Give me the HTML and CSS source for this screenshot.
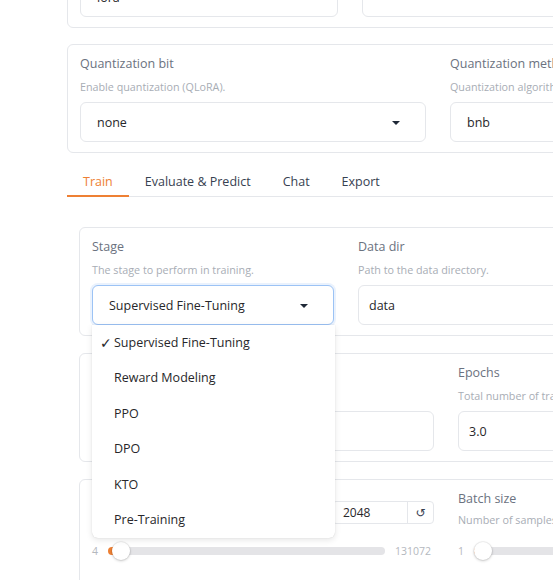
FILE: index.html
```html
<!DOCTYPE html>
<html lang="en">
<head>
<meta charset="utf-8">
<title>Train</title>
<link rel="stylesheet" href="styles.css">
</head>
<body>
<div class="app">
  <div class="panel p0">
    <div class="row cols-p0">
      <div class="field"><div class="dd"><span class="dd-val">lora</span><svg class="caret" viewBox="0 0 18 18"><path d="M5 8l4 4 4-4z"/></svg></div></div>
      <div class="field"><div class="dd"><span class="dd-val"></span><svg class="caret" viewBox="0 0 18 18"><path d="M5 8l4 4 4-4z"/></svg></div></div>
    </div>
  </div>

  <div class="panel">
    <div class="row cols-q">
      <div class="field">
        <span class="lbl">Quantization bit</span>
        <div class="info">Enable quantization (QLoRA).</div>
        <div class="dd"><span class="dd-val">none</span><svg class="caret" viewBox="0 0 18 18"><path d="M5 8l4 4 4-4z"/></svg></div>
      </div>
      <div class="field">
        <span class="lbl">Quantization method</span>
        <div class="info">Quantization algorithm to use for QLoRA.</div>
        <div class="dd"><span class="dd-val">bnb</span><svg class="caret" viewBox="0 0 18 18"><path d="M5 8l4 4 4-4z"/></svg></div>
      </div>
    </div>
  </div>

  <div class="tabs">
    <div class="tab-nav">
      <button class="tab sel">Train</button>
      <button class="tab">Evaluate &amp; Predict</button>
      <button class="tab">Chat</button>
      <button class="tab">Export</button>
    </div>

    <div class="tab-body">
      <div class="panel">
        <div class="row cols-stage">
          <div class="field has-menu">
            <span class="lbl">Stage</span>
            <div class="info">The stage to perform in training.</div>
            <div class="dd focus"><span class="dd-val">Supervised Fine-Tuning</span><svg class="caret" viewBox="0 0 18 18"><path d="M5 8l4 4 4-4z"/></svg></div>
            <ul class="menu">
              <li class="opt sel"><span class="chk">✓</span><span>Supervised Fine-Tuning</span></li>
              <li class="opt"><span class="chk">✓</span><span>Reward Modeling</span></li>
              <li class="opt"><span class="chk">✓</span><span>PPO</span></li>
              <li class="opt"><span class="chk">✓</span><span>DPO</span></li>
              <li class="opt"><span class="chk">✓</span><span>KTO</span></li>
              <li class="opt"><span class="chk">✓</span><span>Pre-Training</span></li>
            </ul>
          </div>
          <div class="field">
            <span class="lbl">Data dir</span>
            <div class="info">Path to the data directory.</div>
            <div class="tb">data</div>
          </div>
        </div>
      </div>

      <div class="panel">
        <div class="row cols-wide">
          <div class="field">
            <span class="lbl">Learning rate</span>
            <div class="info">Initial learning rate for AdamW.</div>
            <div class="tb">5e-5</div>
          </div>
          <div class="field">
            <span class="lbl">Epochs</span>
            <div class="info">Total number of training epochs to perform.</div>
            <div class="tb">3.0</div>
          </div>
        </div>
      </div>

      <div class="panel tall">
        <div class="row cols-wide">
          <div class="field">
            <div class="s-head">
              <div>
                <span class="lbl">Cutoff length</span>
                <div class="info tight">Max tokens in input sequence.</div>
              </div>
              <div class="num"><span class="num-val">2048</span><button class="reset">↺</button></div>
            </div>
            <div class="s-row">
              <span class="s-lim">4</span>
              <input class="range" type="range" min="4" max="131072" value="2048" style="--p:0.0156">
              <span class="s-lim">131072</span>
            </div>
          </div>
          <div class="field">
            <div class="s-head">
              <div>
                <span class="lbl">Batch size</span>
                <div class="info tight">Number of samples processed on each GPU.</div>
              </div>
              <div class="num"><span class="num-val">2</span><button class="reset">↺</button></div>
            </div>
            <div class="s-row">
              <span class="s-lim">1</span>
              <input class="range" type="range" min="1" max="1024" value="2" style="--p:0.001">
              <span class="s-lim">1024</span>
            </div>
          </div>
        </div>
      </div>
    </div>
  </div>
</div>
</body>
</html>
```

FILE: styles.css
```css
html, body {
  margin: 0;
  padding: 0;
  overflow: hidden;
  background: #ffffff;
}

body {
  font-family: "Open Sans", "Noto Sans", sans-serif;
  font-size: 12.5px;
  color: #27272a;
}

.app {
  width: 1100px;
  padding-left: 67px;
  margin-top: -34px;
}

.panel {
  border: 1px solid #e5e7eb;
  border-radius: 6px;
  padding: 9px 12px 10px;
  background: #ffffff;
}

.panel + .panel {
  margin-top: 16px;
}

.panel.tall {
  padding-bottom: 60px;
}

.p0 {
  padding-top: 10px;
}

.row {
  display: grid;
  column-gap: 24px;
}

.cols-p0 { grid-template-columns: 258px 258px 258px; }
.cols-q { grid-template-columns: 346px 346px; }
.cols-stage { grid-template-columns: 242px 242px 242px; }
.cols-wide { grid-template-columns: 342px 342px; }

.field {
  min-width: 0;
}

.lbl {
  display: block;
  font-size: 12.5px;
  line-height: 20px;
  color: #6b7280;
  white-space: nowrap;
}

.info {
  margin-top: 4px;
  font-size: 10.75px;
  line-height: 18px;
  color: #a8adb5;
  white-space: nowrap;
}

.info.tight {
  margin-top: 2px;
}

.dd,
.tb {
  margin-top: 6px;
  height: 40px;
  box-sizing: border-box;
  border: 1px solid #e5e7eb;
  border-radius: 6px;
  display: flex;
  align-items: center;
  background: #ffffff;
  white-space: nowrap;
}

.p0 .dd {
  margin-top: 0;
}

.dd {
  padding: 0 20px 0 16px;
}

.tb {
  padding: 0 10px;
}

.dd-val {
  flex: 1;
}

.caret {
  width: 18px;
  height: 18px;
  fill: #1f2937;
  flex: none;
}

.dd.focus {
  border-color: #9cc3f5;
  box-shadow: 0 0 0 2px #eaf2fd;
}

/* tabs */
.tab-nav {
  display: flex;
  margin-top: 14px;
  border-bottom: 1px solid #e5e7eb;
}

.tab {
  position: relative;
  font: inherit;
  font-size: 12.5px;
  line-height: 20px;
  padding: 5px 16px 4px;
  border: 0;
  background: none;
  color: #374151;
  cursor: pointer;
}

.tab.sel {
  color: #ee8034;
}

.tab.sel::after {
  content: "";
  position: absolute;
  left: 0;
  right: 0;
  bottom: -1px;
  height: 2px;
  background: #ee8034;
}

.tab-body {
  margin-top: 30px;
  margin-left: 12px;
}

.tab-body .panel + .panel {
  margin-top: 17px;
}

/* dropdown menu */
.has-menu {
  position: relative;
}

.menu {
  position: absolute;
  left: 0;
  top: 100%;
  width: 243px;
  margin: 0;
  padding: 0;
  list-style: none;
  background: #ffffff;
  border-radius: 0 0 6px 6px;
  box-shadow: 0 2px 6px rgba(0, 0, 0, 0.10), 0 0 1px rgba(0, 0, 0, 0.18);
  z-index: 10;
}

.opt {
  display: flex;
  align-items: center;
  padding: 7.5px 8px 8px;
  line-height: 20px;
  white-space: nowrap;
  color: #27272a;
}

.chk {
  width: 11px;
  padding-right: 3px;
  visibility: hidden;
  font-family: "DejaVu Sans", sans-serif;
  font-size: 14px;
  color: #27272a;
}

.opt.sel .chk {
  visibility: visible;
}

/* sliders */
.s-head {
  display: flex;
  justify-content: space-between;
  align-items: flex-start;
}

.num {
  margin-top: 12px;
  display: flex;
  width: 102px;
  height: 23px;
  box-sizing: border-box;
  border: 1px solid #e5e7eb;
  border-radius: 4px;
  flex: none;
}

.num-val {
  flex: 1;
  padding-left: 10px;
  font-size: 12px;
  line-height: 21px;
}

.reset {
  width: 26px;
  padding: 0;
  border: 0;
  border-left: 1px solid #e5e7eb;
  background: none;
  font-family: "DejaVu Sans", sans-serif;
  font-size: 12px;
  color: #374151;
}

.s-row {
  display: flex;
  align-items: center;
  gap: 10px;
  height: 20px;
  margin-top: 12px;
  padding-right: 3px;
}

.s-lim {
  font-size: 10.5px;
  color: #b4b8be;
}

.range {
  -webkit-appearance: none;
  appearance: none;
  flex: 1;
  margin: 0;
  height: 8px;
  border-radius: 4px;
  background-color: #e4e4e7;
  background-image: linear-gradient(#ee8034, #ee8034);
  background-repeat: no-repeat;
  background-size: calc(9px + (100% - 18px) * var(--p)) 100%;
  outline: none;
}

.range::-webkit-slider-thumb {
  -webkit-appearance: none;
  appearance: none;
  width: 18px;
  height: 18px;
  border-radius: 50%;
  background: #ffffff;
  box-shadow: 0 0 0 1px rgba(0, 0, 0, 0.05), 0 1px 3px rgba(0, 0, 0, 0.2);
}
```
